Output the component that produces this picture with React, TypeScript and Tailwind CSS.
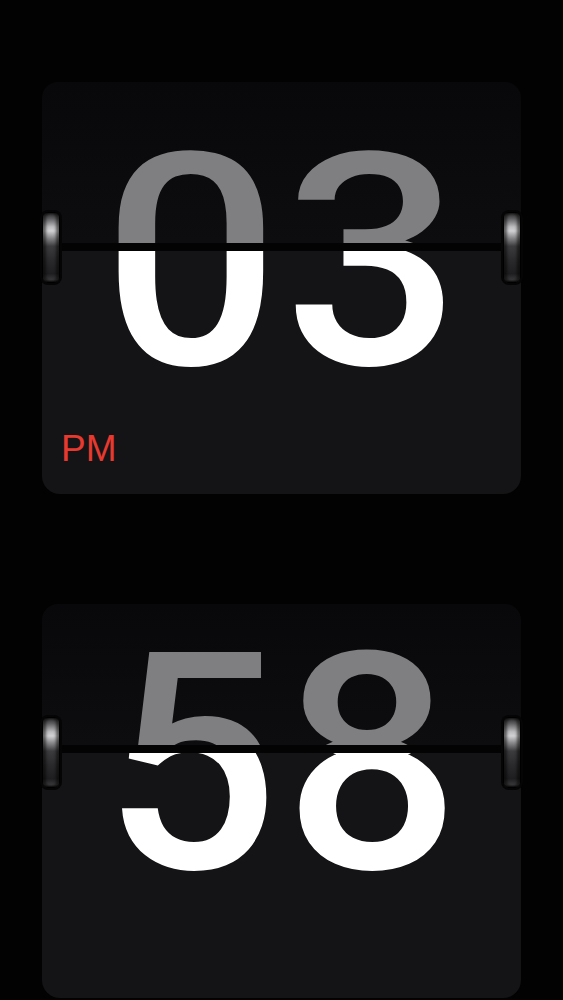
import React from 'react';

type FlipCardProps = {
  digits: string;
  wrapClass: string;
  flapClass: string;
  bottomClass: string;
  hingeClass: string;
  grayClass: string;
  whiteClass: string;
  label?: string;
};

const Hinge = ({ side, hingeClass }: { side: 'left' | 'right'; hingeClass: string }) => (
  <div
    className={`absolute ${hingeClass} ${side === 'left' ? 'left-0' : 'right-0'} h-[71px] w-[18px] rounded-[6px] border border-black bg-[linear-gradient(to_bottom,#2a2a2c_0%,#5e5e60_8%,#bdbdbf_20%,#d2d2d4_26%,#8a8a8c_36%,#3c3c3e_48%,#2a2a2c_68%,#1e1e20_88%,#3a3a3c_97%,#1a1a1a_100%)] shadow-[0_0_0_2px_#050506,inset_3px_0_3px_rgba(0,0,0,0.55),inset_-3px_0_3px_rgba(0,0,0,0.55)]`}
  />
);

const FlipCard = ({ digits, wrapClass, flapClass, bottomClass, hingeClass, grayClass, whiteClass, label }: FlipCardProps) => (
  <div className={`relative flex flex-col ${wrapClass}`}>
    {/* upper flap, mid-flip */}
    <div className={`flex items-end justify-center overflow-hidden rounded-t-[16px] bg-[linear-gradient(to_bottom,#08080a,#0d0d0f)] ${flapClass}`}>
      <div className={`mb-[-159px] pl-[5px] font-['Roboto',sans-serif] text-[310px] font-medium leading-none tracking-[5px] text-[#7f7f81] ${grayClass}`}>{digits}</div>
    </div>
    <div className="h-[8px] bg-[#030304]" />
    {/* lower half */}
    <div className={`flex flex-col overflow-hidden rounded-b-[18px] bg-[#141416] ${bottomClass}`}>
      <div className={`pl-[5px] text-center font-['Roboto',sans-serif] text-[310px] font-medium leading-none tracking-[5px] text-white ${whiteClass}`}>{digits}</div>
      {label && (
        <div className="mt-auto pb-[27px] pl-[19px] text-[37px] leading-none text-[#e6392f]">{label}</div>
      )}
    </div>
    <Hinge side="left" hingeClass={hingeClass} />
    <Hinge side="right" hingeClass={hingeClass} />
  </div>
);

const App = () => {
  return (
    <div className="min-h-[1000px] w-full overflow-hidden bg-[#020203] px-[42px] font-['Liberation_Sans',Arial,sans-serif]">
      <FlipCard
        digits="03"
        label="PM"
        wrapClass="pt-[82px]"
        flapClass="h-[161px]"
        bottomClass="h-[243px]"
        hingeClass="top-[212px]"
        grayClass="origin-[50%_151px] scale-y-[0.817]"
        whiteClass="mt-[-148px]"
      />
      <FlipCard
        digits="58"
        wrapClass="pt-[110px]"
        flapClass="h-[141px]"
        bottomClass="h-[245px]"
        hingeClass="top-[223px]"
        grayClass="origin-[50%_151px] scale-x-[0.94] scale-y-[0.842]"
        whiteClass="mt-[-146px]"
      />
    </div>
  );
};

export default App;
